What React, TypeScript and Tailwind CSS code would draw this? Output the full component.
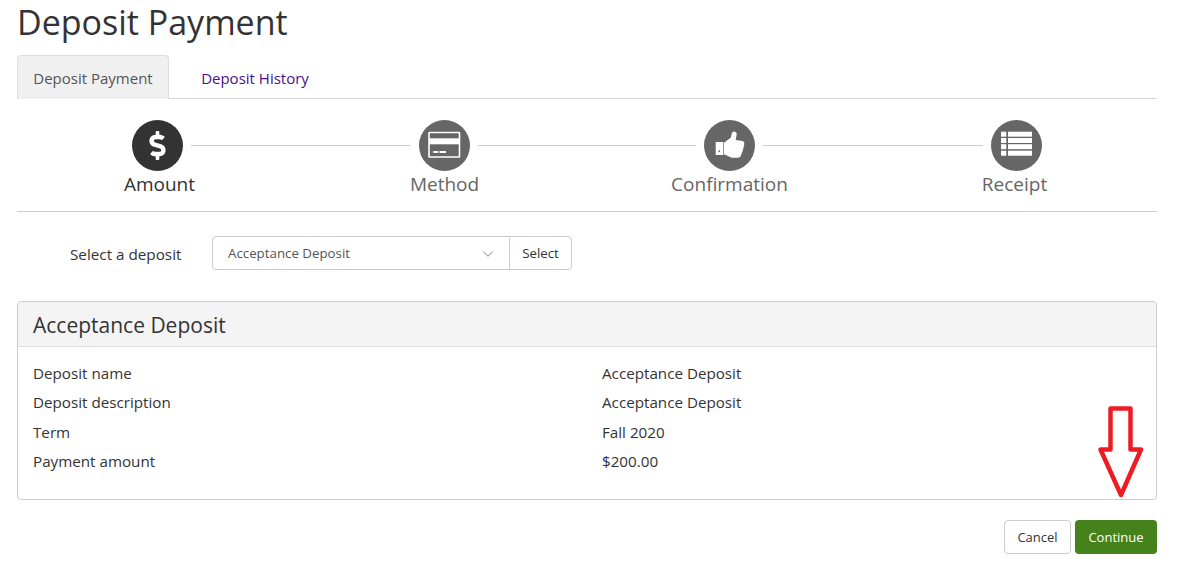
import { FaDollarSign } from 'react-icons/fa'
import { ChevronDown } from 'lucide-react'

const CardIcon = () => (
  <svg width="51" height="51" viewBox="0 0 51 51">
    <rect x="10" y="12.5" width="30.5" height="24.5" fill="none" stroke="#fff" strokeWidth="1.6" rx="0.5" />
    <rect x="10" y="18.3" width="30" height="6" fill="#fff" />
    <rect x="14.3" y="31" width="5" height="2" fill="#fff" />
    <rect x="20.5" y="31" width="6.5" height="2" fill="#fff" />
  </svg>
)

const ThumbIcon = () => (
  <svg width="51" height="51" viewBox="0 0 51 51">
    <path d="M11.7 22H19.3V35H11.7Z" fill="#fff" />
    <rect x="14.5" y="30.5" width="1.6" height="1.6" fill="#666666" />
    <path d="M20 22.7L26.7 17.7L28 12.7Q29.5 11.2 31 11.7Q33 12.5 32.7 14.3L31.7 20L38.7 21Q40.8 22 40.3 24.3L38.7 31L36.5 36.5Q35 37.9 33 37.7L27.7 37.7L20 34.3Z" fill="#fff" />
  </svg>
)

const ListIcon = () => (
  <svg width="51" height="51" viewBox="0 0 51 51" fill="#fff">
    {[11.7, 18, 24.2, 30.7].map(y => (
      <g key={y}>
        <rect x="10" y={y} width="5.3" height="5" />
        <rect x="17" y={y} width="24" height="5" />
      </g>
    ))}
  </svg>
)

const DollarIcon = () => <FaDollarSign size={29} />

const steps = [
  { label: 'Amount', Icon: DollarIcon, active: true, shift: '-translate-x-[2px]', line: 'left-[174px] w-[220px]' },
  { label: 'Method', Icon: CardIcon, active: false, shift: '', line: 'left-[176px] w-[218px]' },
  { label: 'Confirmation', Icon: ThumbIcon, active: false, shift: '', line: 'left-[176px] w-[220px]' },
  { label: 'Receipt', Icon: ListIcon, active: false, shift: 'translate-x-[2px]', line: '' },
]

const details = [
  ['Deposit name', 'Acceptance Deposit'],
  ['Deposit description', 'Acceptance Deposit'],
  ['Term', 'Fall 2020'],
  ['Payment amount', '$200.00'],
]

export default function App() {
  return (
    <main className="relative h-[585px] w-[1178px] overflow-hidden bg-white pl-[17px] pr-[21px] font-['Open_Sans',sans-serif] text-[#333333]">
      <h1 className="h-[55px] text-[34px] leading-[44px]">Deposit Payment</h1>

      {/* Tabs */}
      <div className="flex h-[44px] border-b border-[#d4d4d4]">
        <div className="flex h-[44px] w-[152px] items-center justify-center rounded-t border border-[#dddddd] border-b-0 bg-[#f0f0f0] pt-[2px] text-[15px] text-[#555555]">
          Deposit Payment
        </div>
        <div className="flex h-[44px] w-[172px] items-center justify-center pt-[2px] text-[15px] text-[#4b0f87]">Deposit History</div>
      </div>

      {/* Steps */}
      <div className="grid h-[113px] grid-cols-4 border-b border-[#cccccc] pt-[21px]">
        {steps.map(s => (
          <div key={s.label} className="relative flex flex-col items-center">
            <div className={`flex h-[51px] w-[51px] items-center justify-center rounded-full text-white ${s.active ? 'bg-[#333333]' : 'bg-[#666666]'} ${s.shift}`}>
              <s.Icon />
            </div>
            <div className={`mt-[1px] text-[19px] leading-[25px] ${s.active ? 'text-[#333333]' : 'text-[#666666]'}`}>{s.label}</div>
            {s.line && <div className={`absolute top-[25px] h-px bg-[#cccccc] ${s.line}`} />}
          </div>
        ))}
      </div>

      {/* Select */}
      <div className="flex h-[89px] items-start pt-[24px]">
        <label className="ml-[53px] w-[142px] pt-[8px] text-[15.25px] leading-5">Select a deposit</label>
        <div className="flex h-[34px] w-[360px] rounded border border-[#cccccc] pt-[1px] text-[13.3px] text-[#555555]">
          <div className="flex flex-1 items-center justify-between pl-[15px] pr-[12px]">
            <span>Acceptance Deposit</span>
            <ChevronDown size={18} strokeWidth={1} className="text-[#555555]" />
          </div>
          <div className="flex w-[62px] items-center justify-center border-l border-[#cccccc] text-[#333333]">Select</div>
        </div>
      </div>

      {/* Panel */}
      <section className="h-[199px] rounded border border-[#cccccc]">
        <div className="flex h-[45px] items-center rounded-t border-b border-[#dddddd] bg-[#f4f4f4] px-[15px] pt-[4px] text-[21px]">
          Acceptance Deposit
        </div>
        <div className="px-[15px] pt-[12px] text-[15.2px] leading-[29.4px]">
          {details.map(([k, v]) => (
            <div key={k} className="grid grid-cols-[569px_1fr]">
              <div>{k}</div>
              <div>{v}</div>
            </div>
          ))}
        </div>
      </section>

      {/* Actions */}
      <div className="mt-[20px] flex justify-end gap-1 text-[13px]">
        <button className="h-[34px] w-[67px] rounded border border-[#cccccc] bg-white pt-[2px]">Cancel</button>
        <button className="h-[34px] w-[82px] rounded bg-[#46821c] pt-[2px] text-white">Continue</button>
      </div>

      {/* Red annotation arrow */}
      <svg className="absolute left-[1095px] top-[403px]" width="53" height="98" viewBox="0 0 53 98">
        <path d="M15.5 5.5H35.5V46.5H46L26 92L5.5 46.5H15.5Z" fill="#fff" stroke="#ed1c24" strokeWidth="4.5" strokeLinejoin="round" />
      </svg>
    </main>
  )
}
